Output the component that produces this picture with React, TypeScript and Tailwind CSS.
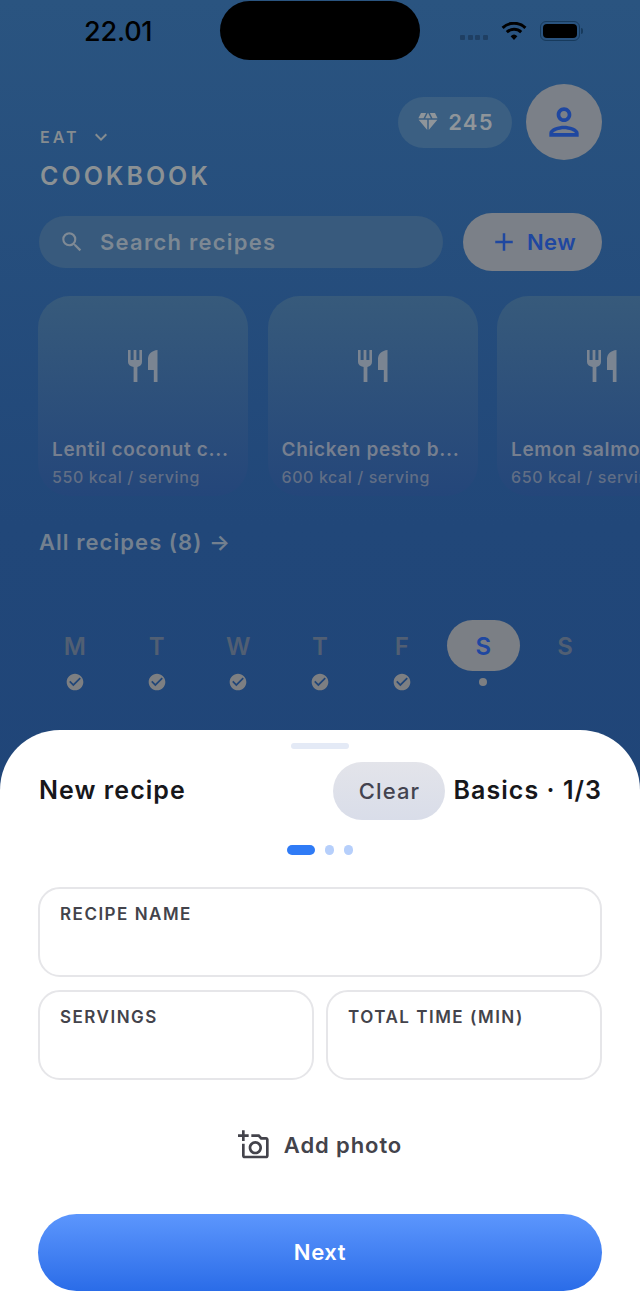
import React from "react";
import {
  MdDiamond,
  MdOutlinePerson,
  MdSearch,
  MdAdd,
  MdCheckCircle,
  MdOutlineAddAPhoto,
  MdKeyboardArrowDown,
} from "react-icons/md";

const recipes = [
  { name: "Lentil coconut c...", kcal: "550 kcal / serving" },
  { name: "Chicken pesto b...", kcal: "600 kcal / serving" },
  { name: "Lemon salmon...", kcal: "650 kcal / serving" },
];

const days = ["M", "T", "W", "T", "F", "S", "S"];

const CutleryIcon = () => (
  <svg viewBox="0 0 30 32" className="h-[32px] w-[30px]" fill="currentColor">
    <path d="M0 0h2.6v10h3V0h2.8v10h3V0H14v12c0 2.6-1.8 4.4-4.6 5V32H5.6V17C2 16.4 0 14.6 0 12z" />
    <path d="M29.5 0V32h-3.7V20H20V9c0-5 4-8.4 9.5-9z" />
  </svg>
);

const StatusBar = () => (
  <div className="flex h-[60px] items-center">
    <div className="w-[220px] pl-[84px] pt-[2px] text-[27px] font-medium leading-none tracking-[-0.2px] text-black">
      22.01
    </div>
    <div className="h-[59px] w-[200px] rounded-[30px] bg-black" />
    <div className="flex flex-1 items-center pl-[40px]">
      <div className="mt-[14px] flex gap-[2.5px]">
        <span className="h-[5px] w-[5px] rounded-[1px] bg-[#1f3f63]" />
        <span className="h-[5px] w-[5px] rounded-[1px] bg-[#1f3f63]" />
        <span className="h-[5px] w-[5px] rounded-[1px] bg-[#1f3f63]" />
        <span className="h-[5px] w-[5px] rounded-[1px] bg-[#1f3f63]" />
      </div>
      <svg viewBox="0 0 26 18" className="ml-[13px] mt-[1px] h-[18px] w-[26px]">
        <path d="M13 18l-3.4-3.8a5 5 0 0 1 6.8 0z" fill="#000" />
        <path d="M5.8 10.2a10.5 10.5 0 0 1 14.4 0" fill="none" stroke="#000" strokeWidth="3" />
        <path d="M1.6 5.8a16.6 16.6 0 0 1 22.8 0" fill="none" stroke="#000" strokeWidth="3" />
      </svg>
      <div className="ml-[13px] mt-[1px] flex items-center">
        <div className="h-[20px] w-[40px] rounded-[6px] border border-[#173a5c] p-[2px]">
          <div className="h-full w-full rounded-[4px] bg-black" />
        </div>
        <div className="ml-[1px] h-[6px] w-[2px] rounded-r-sm bg-[#173a5c]" />
      </div>
    </div>
  </div>
);

const RecipeCard = ({ name, kcal }: { name: string; kcal: string }) => (
  <div className="flex h-[200px] w-[210px] shrink-0 flex-col overflow-hidden rounded-[32px] bg-gradient-to-b from-[#375a7b] to-[#24467a] px-[14px]">
    <div className="flex justify-center pt-[54px] text-[#7b8592]">
      <CutleryIcon />
    </div>
    <div className="mt-auto whitespace-nowrap pb-[9px]">
      <div className="text-[19px] font-semibold leading-[24px] tracking-[0.65px] text-[#767f8f]">{name}</div>
      <div className="mt-[5px] text-[16px] font-medium leading-[20px] tracking-[0.6px] text-[#616e85]">{kcal}</div>
    </div>
  </div>
);

const Field = ({ label }: { label: string }) => (
  <div className="h-[90px] flex-1 shrink-0 rounded-[22px] border-2 border-[#e6e6e9] px-[20px] pt-[15px] text-[17px] font-semibold leading-[20px] tracking-[1.5px] text-[#43434b]">
    {label}
  </div>
);

export default function App() {
  return (
    <div
      className="flex h-[1312px] w-[640px] flex-col overflow-hidden bg-gradient-to-b from-[#2a5480] via-[#214779] via-40% to-[#1e4277]"
      style={{ fontFamily: "Inter, 'Noto Sans', sans-serif" }}
    >
      <StatusBar />

      <div className="flex h-[670px] flex-col">
        <div className="flex items-start justify-between pl-[40px] pr-[38px] pt-[24px]">
          <div className="pt-[41px]">
            <div className="flex items-center text-[16px] font-semibold leading-[20px] tracking-[3px] text-[#858c90]">
              EAT
              <MdKeyboardArrowDown size={24} className="ml-[9px]" />
            </div>
            <div className="mt-[12px] text-[25px] font-semibold leading-[30px] tracking-[3px] text-[#8b9194]">
              COOKBOOK
            </div>
          </div>
          <div className="flex items-center gap-[14px]">
            <div className="flex h-[51px] w-[114px] items-center justify-center gap-[8px] rounded-full bg-[#3b5f82] text-[22px] font-semibold tracking-[1.2px] text-[#8f959a]">
              <MdDiamond size={24} />
              245
            </div>
            <div className="flex h-[76px] w-[76px] items-center justify-center rounded-full bg-[#7b8088] text-[#1f47a0]">
              <MdOutlinePerson size={44} />
            </div>
          </div>
        </div>

        <div className="mt-[22px] flex items-center justify-between pl-[39px] pr-[38px]">
          <div className="flex h-[52px] w-[404px] items-center rounded-full bg-[#385a7d] pl-[20px] text-[22px] font-semibold tracking-[1.25px] text-[#7d8893]">
            <MdSearch size={26} className="text-[#7f8a95]" />
            <span className="ml-[15px]">Search recipes</span>
          </div>
          <div className="flex h-[58px] w-[139px] items-center justify-center gap-[8px] rounded-full bg-[#7b8088] text-[22px] font-semibold tracking-[0.4px] text-[#1f47a0]">
            <MdAdd size={30} />
            New
          </div>
        </div>

        <div className="mt-[25px] flex gap-[19.5px] overflow-hidden pl-[38px]">
          {recipes.map((r) => (
            <RecipeCard key={r.name} name={r.name} kcal={r.kcal} />
          ))}
        </div>

        <div className="mt-[31px] pl-[39px] text-[22px] font-semibold leading-[30px] tracking-[1.05px] text-[#73808f]">
          All recipes (8) →
        </div>

        <div className="mt-[63px] grid grid-cols-7 pl-[34px] pr-[34px]">
          {days.map((d, i) => (
            <div key={i} className="flex flex-col items-center">
              <div
                className={
                  i === 5
                    ? "flex h-[51px] w-[73px] items-center justify-center rounded-[26px] bg-[#7b7f85] pt-[2px] text-[24px] font-semibold text-[#1f47a0]"
                    : "flex h-[51px] w-[73px] items-center justify-center pt-[2px] text-[24px] font-semibold text-[#515f73]"
                }
              >
                {d}
              </div>
              <div className="mt-[1px] flex h-[20px] items-center justify-center">
                {i < 5 && <MdCheckCircle size={20} className="text-[#7d7f82]" />}
                {i === 5 && <span className="h-[8px] w-[8px] rounded-full bg-[#7d7f82]" />}
              </div>
            </div>
          ))}
        </div>
      </div>

      <div className="flex flex-1 flex-col rounded-t-[60px] bg-white px-[38px]">
        <div className="mx-auto mt-[13px] h-[6px] w-[58px] rounded-full bg-[#e4eaf6]" />
        <div className="mt-[13px] flex h-[58px] items-center">
          <div className="ml-[1px] text-[25px] font-semibold tracking-[1.05px] text-[#17171b]">New recipe</div>
          <div className="ml-auto flex h-[58px] w-[112px] items-center justify-center rounded-[29px] bg-gradient-to-b from-[#e3e4ea] to-[#d9dde9] text-[22px] font-medium tracking-[1.1px] text-[#43434f]">
            Clear
          </div>
          <div className="ml-[8px] text-[25px] font-semibold tracking-[1.05px] text-[#17171b]">Basics · 1/3</div>
        </div>
        <div className="mt-[25px] flex items-center justify-center gap-[10px]">
          <span className="h-[10px] w-[28px] rounded-full bg-[#2f7bf6]" />
          <span className="h-[10px] w-[9px] rounded-full bg-[#b6cffb]" />
          <span className="h-[10px] w-[9px] rounded-full bg-[#b6cffb]" />
        </div>
        <div className="mt-[32px] flex flex-col gap-[13px]">
          <div className="flex">
            <Field label="RECIPE NAME" />
          </div>
          <div className="flex gap-[12px]">
            <Field label="SERVINGS" />
            <Field label="TOTAL TIME (MIN)" />
          </div>
        </div>
        <div className="mt-[46px] flex items-center justify-center gap-[14px] text-[22px] font-semibold leading-[38px] tracking-[0.9px] text-[#43434b]">
          <MdOutlineAddAPhoto size={32} />
          Add photo
        </div>
        <div className="mt-[50px] flex h-[77px] items-center justify-center rounded-full bg-gradient-to-b from-[#5c96fd] to-[#2a6ce8] text-[22px] font-semibold tracking-[0.6px] text-white">
          Next
        </div>
      </div>
    </div>
  );
}
